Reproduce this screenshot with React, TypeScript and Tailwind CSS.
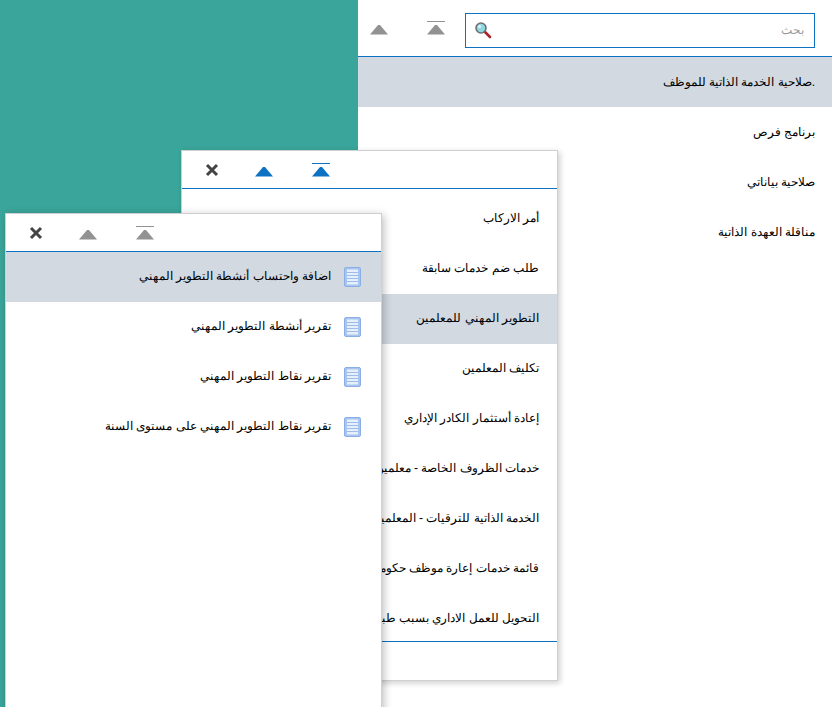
const Tri = ({ color, bar }: { color: string; bar?: boolean }) => (
  <svg width={18} height={14} viewBox="0 0 18 14" className="block">
    {bar && <rect x="0" y="0" width="18" height="1" fill={color} />}
    <path d="M0 13.5 L8 4 L10 4 L18 13.5 Z" fill={color} />
  </svg>
);

const Close = () => (
  <svg width="14" height="14" viewBox="0 0 14 14" className="block">
    <path d="M2 2 L12 12 M12 2 L2 12" stroke="#444" strokeWidth="3" />
  </svg>
);

const Magnifier = () => (
  <svg width="18" height="18" viewBox="0 0 18 18" className="block">
    <path d="M10.5 10.5 L16 16" stroke="#a8232a" strokeWidth="2.6" strokeLinecap="round" />
    <circle cx="7" cy="7" r="5" fill="#8fd8e0" stroke="#6b6f74" strokeWidth="1.6" />
    <circle cx="5.5" cy="5.5" r="1.6" fill="#d9f4f6" />
  </svg>
);

const Doc = () => (
  <svg width="17" height="20" viewBox="0 0 17 20" className="mb-[1px] block shrink-0">
    <rect x="0.5" y="0.5" width="16" height="19" rx="1.5" fill="#a9c4ef" stroke="#8aaee6" />
    <rect x="3" y="2.5" width="11" height="15" fill="#e6effc" />
    <path d="M3 5.5H14M3 8.5H14M3 11.5H14M3 14.5H14" stroke="#9dbcec" strokeWidth="1" />
  </svg>
);

const panelOne = [".صلاحية الخدمة الذاتية للموظف", "برنامج فرص", "صلاحية بياناتي", "مناقلة العهدة الذاتية"];
const panelTwo = [
  "أمر الاركاب",
  "طلب ضم خدمات سابقة",
  "التطوير المهني للمعلمين",
  "تكليف المعلمين",
  "إعادة أستثمار الكادر الإداري",
  "خدمات الظروف الخاصة - معلمين",
  "الخدمة الذاتية للترقيات - المعلمين",
  "قائمة خدمات إعارة موظف حكومي",
  "التحويل للعمل الاداري بسبب طبي",
];
const panelThree = [
  "اضافة واحتساب أنشطة التطوير المهني",
  "تقرير أنشطة التطوير المهني",
  "تقرير نقاط التطوير المهني",
  "تقرير نقاط التطوير المهني على مستوى السنة",
];

export default function App() {
  return (
    <div className="relative h-[707px] w-[832px] overflow-hidden bg-[#3aa59a] font-['Liberation_Sans','Noto_Sans',sans-serif]">
      {/* Back window */}
      <div className="absolute top-0 left-[358px] flex h-[707px] w-[474px] flex-col bg-white">
        <div className="flex h-[57px] shrink-0 items-center border-b border-[#0b72c4] pb-[1px]">
          <div className="ml-[12px]"><Tri color="#929292" /></div>
          <div className="ml-[39px]"><Tri color="#929292" bar /></div>
          <div className="mt-[5px] ml-[20px] flex h-[35px] w-[350px] items-center justify-between border border-[#0b72c4] pr-[8px] pl-[8px]">
            <Magnifier />
            <span dir="rtl" className="mr-[2px] text-[12px] text-[#9a9a9a]">بحث</span>
          </div>
        </div>
        <div dir="rtl" className="flex flex-col">
          {panelOne.map((t, i) => (
            <div key={t} className={`flex h-[50px] items-center pr-[17px] text-[12px] text-black ${i === 0 ? "bg-[#d2d9e0]" : ""}`}>{t}</div>
          ))}
        </div>
      </div>

      {/* Middle window */}
      <div className="absolute top-[150px] left-[181px] flex h-[531px] w-[377px] flex-col border border-[#d0d0d0] bg-white shadow-[2px_2px_6px_rgba(0,0,0,0.2)]">
        <div className="flex h-[38px] shrink-0 items-center border-b border-[#0b72c4]">
          <div className="ml-[23px]"><Close /></div>
          <div className="ml-[36px]"><Tri color="#0b72c4" /></div>
          <div className="ml-[39px]"><Tri color="#0b72c4" bar /></div>
        </div>
        <div dir="rtl" className="flex h-[453px] shrink-0 flex-col overflow-hidden border-b border-[#0b72c4] pt-[5px]">
          {panelTwo.map((t, i) => (
            <div key={t} className={`flex h-[50px] shrink-0 items-center whitespace-nowrap pr-[18px] pb-[2px] text-[12px] text-black ${i === 2 ? "bg-[#d2d9e0]" : ""}`}>{t}</div>
          ))}
        </div>
      </div>

      {/* Front window */}
      <div className="absolute top-[213px] left-[5px] flex h-[520px] w-[377px] flex-col border border-[#d0d0d0] bg-white shadow-[2px_2px_8px_rgba(0,0,0,0.25)]">
        <div className="flex h-[38px] shrink-0 items-center border-b border-[#0b72c4]">
          <div className="ml-[23px]"><Close /></div>
          <div className="ml-[36px]"><Tri color="#929292" /></div>
          <div className="ml-[39px]"><Tri color="#929292" bar /></div>
        </div>
        <div dir="rtl" className="flex flex-col">
          {panelThree.map((t, i) => (
            <div key={t} className={`flex h-[50px] shrink-0 items-center gap-[13px] whitespace-nowrap pr-[20px] text-[12px] text-black ${i === 0 ? "bg-[#d2d9e0]" : ""}`}>
              <Doc />
              <span className="pb-[2px]">{t}</span>
            </div>
          ))}
        </div>
      </div>
    </div>
  );
}
